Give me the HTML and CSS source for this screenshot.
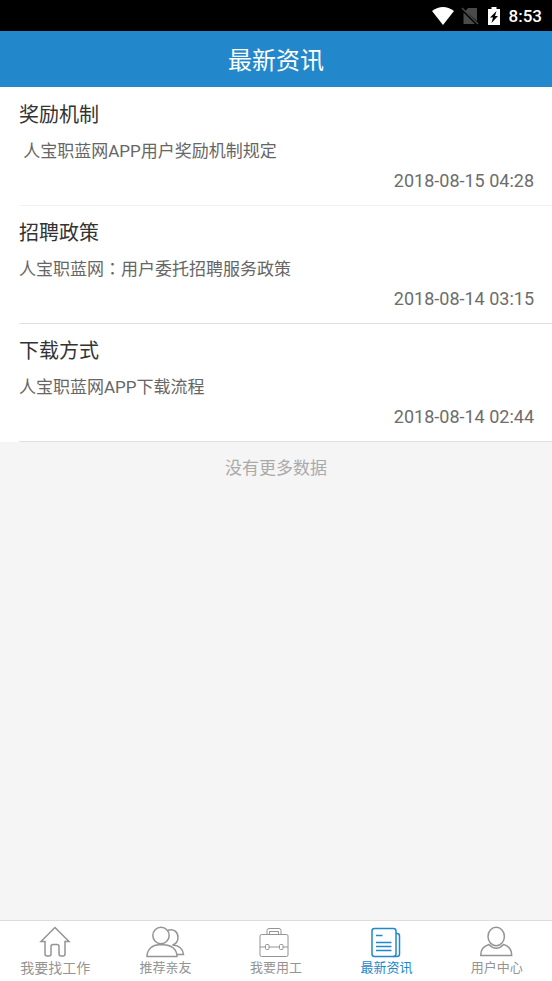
FILE: index.html
```html
<!DOCTYPE html>
<html lang="zh-CN">
<head>
<meta charset="utf-8">
<meta name="viewport" content="width=device-width, initial-scale=1">
<title>最新资讯</title>
<link rel="stylesheet" href="styles.css">
</head>
<body>
<div class="status">
  <svg width="22" height="18" viewBox="0 0 22 18" aria-hidden="true"><path fill="#fff" d="M0 4Q11-4 22 4L11 18Z"/></svg>
  <svg class="sim" width="18" height="18" viewBox="0 0 18 18" aria-hidden="true"><path fill="#4a4a4a" d="M7 1h9v13L4.500 4zM2.500 5.500 14 17H2.500z"/><path stroke="#4a4a4a" stroke-width="1.500" d="M1 1l16 16"/></svg>
  <svg class="battery" width="12" height="18" viewBox="0 0 12 18" aria-hidden="true"><path fill="#fff" d="M3.500 0h5v2H12v16H0V2h3.500z"/><path fill="#000" d="M8.500 4 2 10.500h3L3.500 16 10 9H7z"/></svg>
  <time class="clock">8:53</time>
</div>
<header class="header"><h1 class="header-title">最新资讯</h1></header>
<main class="content">
  <ul class="news">
    <li class="item">
      <h2 class="item-title">奖励机制</h2>
      <p class="item-text">&nbsp;人宝职蓝网APP用户奖励机制规定</p>
      <time class="item-date">2018-08-15 04:28</time>
    </li>
    <li class="item">
      <h2 class="item-title">招聘政策</h2>
      <p class="item-text">人宝职蓝网<span class="colon" lang="zh-TW">：</span>用户委托招聘服务政策</p>
      <time class="item-date">2018-08-14 03:15</time>
    </li>
    <li class="item">
      <h2 class="item-title">下载方式</h2>
      <p class="item-text">人宝职蓝网APP下载流程</p>
      <time class="item-date">2018-08-14 02:44</time>
    </li>
  </ul>
  <p class="end">没有更多数据</p>
</main>
<nav class="tabs">
  <a class="tab tab-large" href="#jobs">
    <svg class="icon" viewBox="0 0 40 32" aria-hidden="true"><path d="M20 1.500 6 15.500h4V28q0 2 2 2h2q2 0 2-2v-7.500q0-2 2-2h4q2 0 2 2V28q0 2 2 2h2q2 0 2-2V15.500h4z"/></svg>
    <span>我要找工作</span>
  </a>
  <a class="tab" href="#friends">
    <svg class="icon" viewBox="0 0 40 32" aria-hidden="true"><circle cx="15" cy="9.500" r="8.200"/><path d="M1 30.500C1 23 7 18.700 13 18.700h4C25 18.700 31 23 31 30.500zM22 4.300C28 2.500 32 6 32 11.500c0 4-2.500 6.500-5.500 7.500C33 19.500 37 23 37.500 28.500H31"/></svg>
    <span>推荐亲友</span>
  </a>
  <a class="tab" href="#hire">
    <svg class="icon thin" viewBox="0 0 40 32" aria-hidden="true"><path d="M11 8.500v-4q0-2 2-2h10q2 0 2 2v4M13.500 8.500v-3h9v3M4 10q0-1.500 1.500-1.500h25q1.500 0 1.500 1.500v19q0 1.500-1.500 1.500h-25Q4 30.500 4 29zM4 21h5.500M13 21h10.500M27 21h5"/><rect x="9.500" y="18.500" width="3.500" height="5" rx="1"/><rect x="23.500" y="18.500" width="3.500" height="5" rx="1"/></svg>
    <span>我要用工</span>
  </a>
  <a class="tab active" href="#news" aria-current="page">
    <svg class="icon" viewBox="0 0 40 32" aria-hidden="true"><rect x="6" y="2.500" width="24" height="28" rx="2.500"/><path d="M30 7.500h1q2.500 0 2.500 2.500v18q0 2.500-2.500 2.500h-4M10 9.500h6.500M10 16.500h15.500M10 20.500h15.500M10 24.500h15.500"/></svg>
    <span>最新资讯</span>
  </a>
  <a class="tab" href="#user">
    <svg class="icon" viewBox="0 0 40 32" aria-hidden="true"><ellipse cx="19.200" cy="10.500" rx="8.200" ry="9.300"/><path d="M12 18.500C6.500 20 3.700 24 3.700 29.500h31c0-5.500-2.700-9.500-8.200-11-4.500 5-10 5-14.500 0z"/></svg>
    <span>用户中心</span>
  </a>
</nav>
</body>
</html>
```
FILE: styles.css
```css
* {
  box-sizing: border-box;
}

body {
  margin: 0;
  min-height: 100vh;
  display: flex;
  flex-direction: column;
  background: #f5f5f5;
  color: #333;
  font-family: Roboto, "Noto Sans CJK SC", sans-serif;
}

h1, h2, p, ul {
  margin: 0;
  padding: 0;
  font-weight: 400;
}

.status {
  height: 31px;
  padding: 0 10px;
  display: flex;
  align-items: center;
  justify-content: flex-end;
  background: #000;
  color: #fff;
}

.sim {
  margin-left: 7px;
}

.battery {
  margin-left: 9px;
}

.clock {
  margin-left: 9px;
  font-size: 17px;
  font-weight: 500;
}

.header {
  height: 56px;
  padding-top: 4px;
  display: flex;
  align-items: center;
  justify-content: center;
  background: #2288cb;
  color: #fff;
}

.header-title {
  font-size: 24px;
  line-height: 36px;
}

.content {
  flex: 1;
}

.news {
  list-style: none;
  padding: 1px 0 0 19px;
  background: #fff;
}

.item {
  padding: 12px 18px 10px 0;
  border-bottom: 1px solid #e0e0e0;
}

.item:first-child {
  border-color: #f2f2f2;
}

.item-title {
  font-size: 20px;
  line-height: 30px;
}

.item-text {
  margin-top: 8px;
  color: #666;
  font-size: 17px;
  line-height: 26px;
}

.colon {
  font-family: "Noto Sans CJK TC", sans-serif;
  line-height: 1;
}

.item-date {
  display: block;
  margin-top: 3px;
  color: #6d6d6d;
  font-size: 18px;
  line-height: 28px;
  text-align: right;
}

.end {
  padding: 13px;
  color: #aaa;
  font-size: 17px;
  line-height: 26px;
  text-align: center;
}

.tabs {
  display: flex;
  height: 61px;
  padding-top: 5px;
  border-top: 1px solid #ddd;
  background: #fff;
}

.tab {
  flex: 1;
  display: flex;
  flex-direction: column;
  align-items: center;
  color: #949494;
  font-size: 13px;
  line-height: 20px;
  text-decoration: none;
}

.tab-large {
  font-size: 14px;
}

.active {
  color: #2288cb;
}

.icon {
  width: 40px;
  height: 32px;
  fill: none;
  stroke: currentColor;
  stroke-width: 1.5;
}

.thin {
  stroke-width: 1;
}
```
